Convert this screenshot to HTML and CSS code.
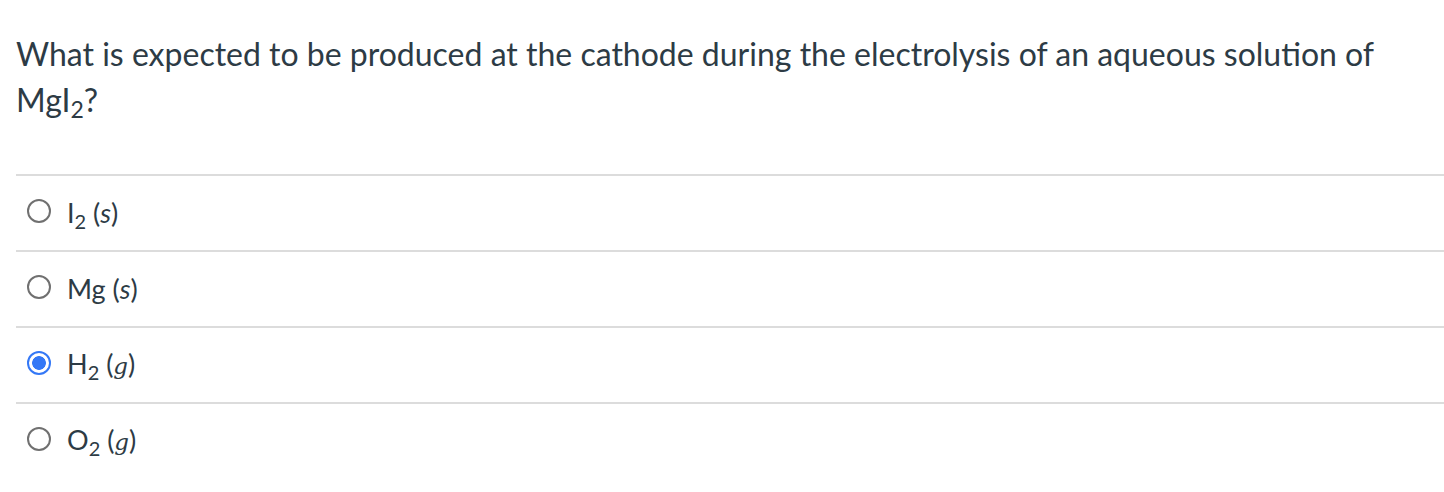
FILE: index.html
```html
<!DOCTYPE html>
<html lang="en">
<head>
<meta charset="utf-8">
<link rel="stylesheet" href="styles.css">
</head>
<body>
<div class="quiz">
  <div class="question">What is expected to be produced at the cathode during the electrolysis of an aqueous solution of MgI<sub>2</sub>?</div>
  <div class="answers">
    <label class="answer"><span class="radio"></span><span class="text">I<sub>2</sub> (<i>s</i>)</span></label>
    <label class="answer"><span class="radio"></span><span class="text">Mg (<i>s</i>)</span></label>
    <label class="answer"><span class="radio checked"></span><span class="text">H<sub>2</sub> (<i class="g">g</i>)</span></label>
    <label class="answer"><span class="radio"></span><span class="text">O<sub>2</sub> (<i class="g">g</i>)</span></label>
  </div>
</div>
</body>
</html>
```
FILE: styles.css
```css
html, body {
  margin: 0;
  padding: 0;
  background: #fff;
}
body {
  font-family: Lato, "Open Sans", sans-serif;
  color: #2d3b45;
}
.quiz {
  padding-left: 16px;
}
.question {
  padding-top: 31px;
  font-size: 32px;
  line-height: 46px;
  padding-right: 16px;
}
.question sub {
  font-size: 23px;
  line-height: 1;
  vertical-align: -6px;
}
.answers {
  margin-top: 51px;
}
.answer {
  display: flex;
  align-items: center;
  height: 74px;
  border-top: 2px solid #dcdcdc;
}
.radio {
  box-sizing: border-box;
  width: 24px;
  height: 24px;
  border-radius: 50%;
  border: 2px solid #707070;
  margin-left: 11px;
  margin-right: 16px;
  margin-top: -4px;
  flex: none;
}
.radio.checked {
  border: 2.5px solid #3478f6;
  background: radial-gradient(circle, #3478f6 0 6.5px, #fff 7.2px);
}
.text {
  font-size: 27px;
  line-height: 34px;
}
.text sub {
  font-size: 20px;
  line-height: 1;
  vertical-align: -6px;
}
.text i {
  font-style: italic;
}
.text i.g {
  font-family: "DejaVu Serif", serif;
  font-size: 23px;
}
```
